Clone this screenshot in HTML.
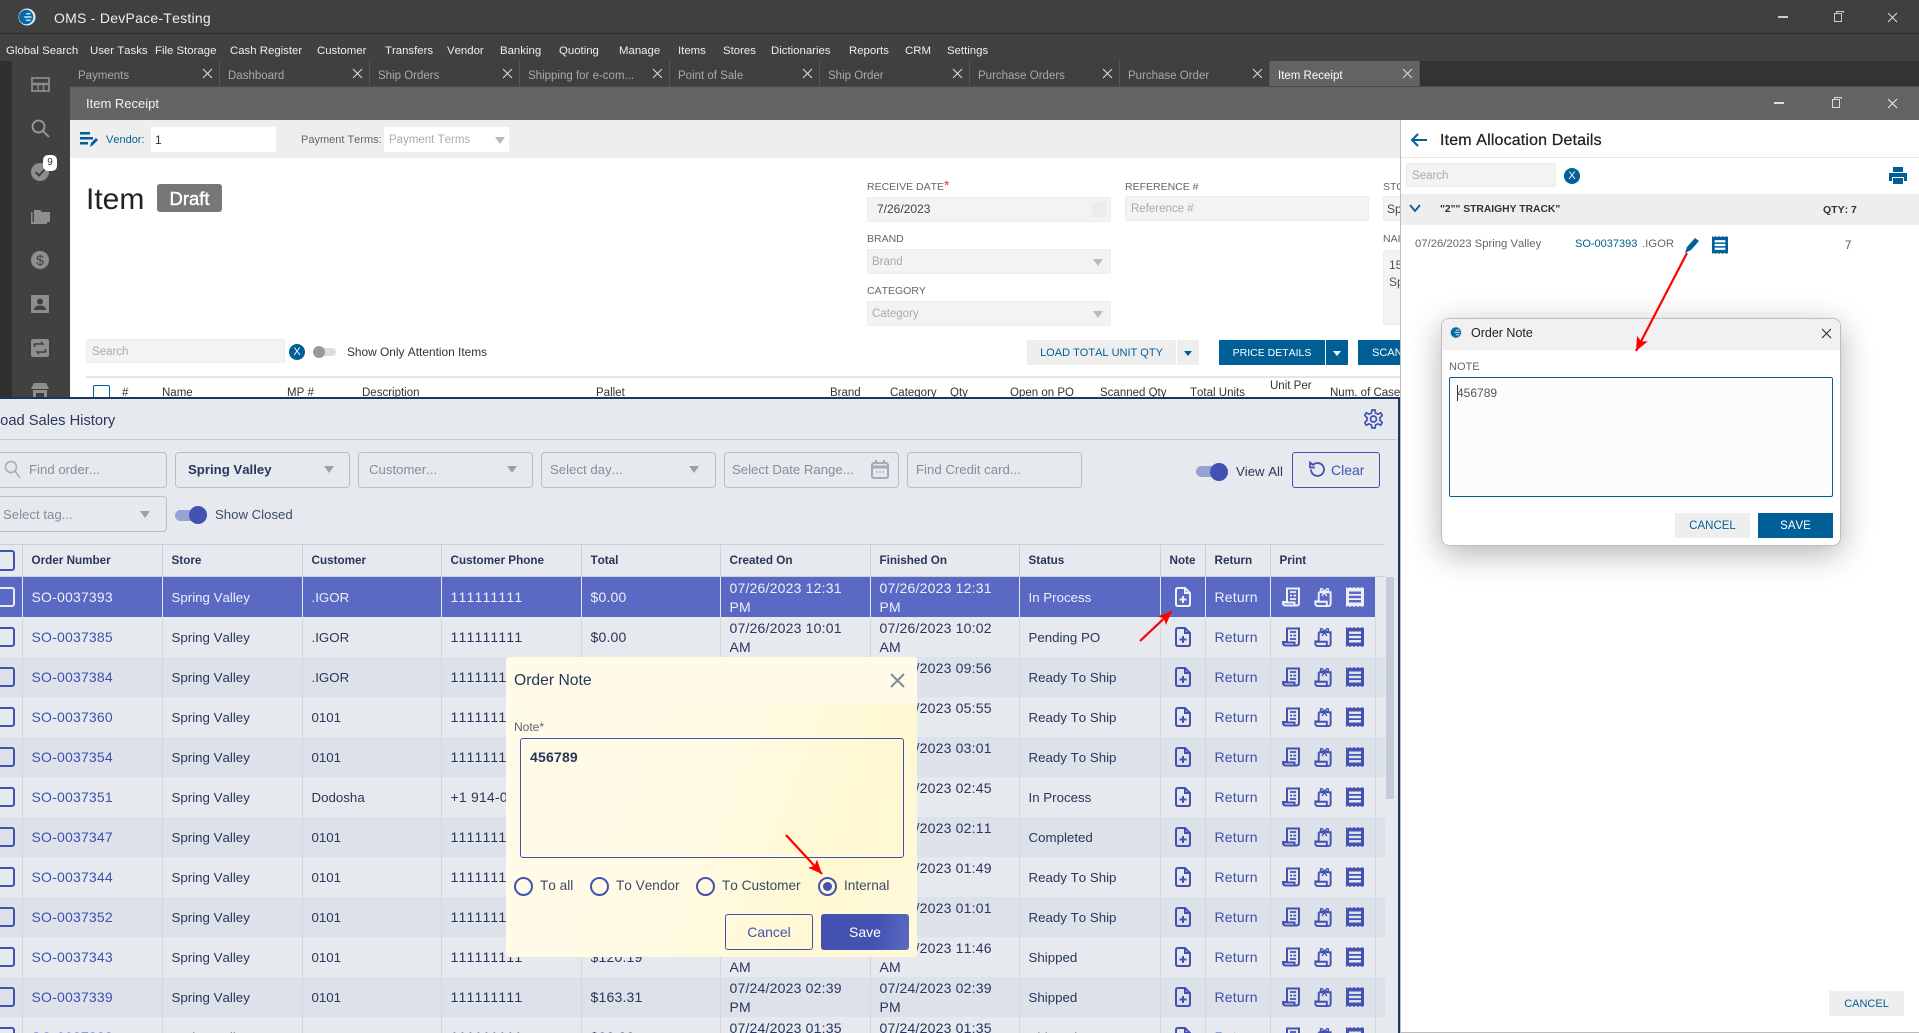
<!DOCTYPE html>
<html lang="en">
<head>
<meta charset="utf-8">
<title>OMS - DevPace-Testing</title>
<style>
html,body{margin:0;padding:0;width:1919px;height:1033px;overflow:hidden;background:#fff;font-family:"Liberation Sans",Arial,sans-serif;font-kerning:none}
*{box-sizing:border-box}
#p{position:relative;width:1919px;height:1033px;overflow:hidden;background:#fff}
.a{position:absolute}
.t{position:absolute;line-height:20px;white-space:nowrap}
.m{color:#eee;font-size:11.4px;top:41px}
.tab{position:absolute;top:61px;width:150px;height:25px;border-right:1px solid #555;background:#3f3f3f;color:#aaa;font-size:11.5px;line-height:30px;padding-left:8px}
.tab svg{position:absolute;left:132px;top:7px;width:11px;height:11px;stroke:#ddd;stroke-width:1;fill:none}
.tab.on{background:#636363;color:#fff}
.lb{font-size:10.5px;color:#666}
.inp{position:absolute;background:#f3f3f3;border:1px solid #ececec;border-radius:2px}
.ph{font-size:11.5px;color:#aaa}
.th1{font-size:11.5px;color:#333;top:383px}
.f{position:absolute;border:1.5px solid #b9bec8;border-radius:4px;height:36px}
.pt{font-size:13.2px;color:#858d9b;top:460px}
.tri{position:absolute;width:0;height:0;border-left:5px solid transparent;border-right:5px solid transparent;border-top:7px solid #98a0ae}
#rows{position:absolute;left:0;top:544px;width:1385px;color:#1f2f52;font-size:14px;letter-spacing:.2px}
.r{display:grid;grid-template-columns:23px 140px 140px 139px 140px 139px 150px 149px 141px 45px 65px 105px 9px;height:40px;line-height:19px;background:#e6eaee;--b:#e6eaee;color:#27365a}
.r.d{background:#dde1ea}
.r>div{border-right:1px solid #d3d8e0;padding-left:8.5px;padding-top:1px;display:flex;align-items:center;white-space:nowrap;overflow:hidden;position:relative}
.r>div:nth-child(3),.r>div:nth-child(4),.r>div:nth-child(9){font-size:13.3px;letter-spacing:0}
.r>div:first-child{padding:0}
.r>div:last-child{border:0;background:#e6eaee}
.r.d>div:last-child{background:#dde1ea}
.r a{color:#3f50ae}
.r.s{background:linear-gradient(to right,#5a6ac4 1376px,#e6eaee 1376px);color:#eef0fa}
.r.s>div{border-right-color:#e4e7f4}
.r.s a{color:#eef0fa}
.r.s>div:last-child{background:#e6eaee}
.r.h{height:33px;border-top:1px solid #cbd0d8;border-bottom:1px solid #cbd0d8;font-weight:700;color:#27365a;background:#e6eaee}
.r.h>div,.r.h>div:nth-child(n){font-size:11.7px;letter-spacing:0;border-right-color:#cbd0d8;padding-top:0}
.cb{position:absolute;left:-5px;top:10px;width:20px;height:20px;border:2.5px solid #4352b0;border-radius:3px}
.r.h .cb{top:5px;height:21px}
.r.s .cb{border-color:#e8ebf7}
.ic{color:#4352b0}
.r.s .ic{color:#eef0fa}
.ic svg{position:absolute;top:10px}
.rad{position:absolute;top:877px;width:19px;height:19px;border-radius:50%;border:2px solid #4352b0}
.rl{font-size:13.6px;color:#3c4a68;top:876px}
</style>
</head>
<body>
<svg width="0" height="0" style="position:absolute">
<defs>
<symbol id="x" viewBox="0 0 11 11"><path d="M1 1L10 10M10 1L1 10"/></symbol>
<symbol id="note" viewBox="0 0 16 20"><path d="M3 1H10L15 6V17Q15 19 13 19H3Q1 19 1 17V3Q1 1 3 1ZM10 1V6H15" fill="none" stroke="currentColor" stroke-width="2"/><path d="M8 9V16M4.500 12.500H11.500" fill="none" stroke="currentColor" stroke-width="2"/></symbol>
<symbol id="rc" viewBox="0 0 18 20"><path d="M5 1.500H17V16Q17 18.500 14.500 18.500H3.500Q1 18.500 1 16V15H5ZM1 15.500H12.500V19" fill="none" stroke="currentColor" stroke-width="2"/><path d="M8 5H14M8 8.500H10M11.500 8.500H14M8 12H14" fill="none" stroke="currentColor" stroke-width="1.700"/></symbol>
<symbol id="gf" viewBox="0 0 18 21"><path d="M4.500 5.500V15H1V17.500Q1 20 3.500 20H14.500Q17 20 17 17.500V5.500H4.500M1 15.500H13V20" fill="none" stroke="currentColor" stroke-width="2"/><path d="M10.500 5C8 .7 5.500 .7 6.500 4.200L10.500 5C13 .7 15.500 .7 14.500 4.200L10.500 5M10.500 5.500L8 9.500M10.500 5.500L13 9.500" fill="none" stroke="currentColor" stroke-width="1.400"/></symbol>
<symbol id="ls" viewBox="0 0 18 20"><path fill="currentColor" fill-rule="evenodd" d="M0 0L2 1.200L4 0L6 1.200L8 0L10 1.200L12 0L14 1.200L16 0L18 1.200V18.800L16 20L14 18.800L12 20L10 18.800L8 20L6 18.800L4 20L2 18.800L0 20ZM3 4.500V7H15V4.500ZM3 8.800V11.200H15V8.800ZM3 13V15.500H15V13Z"/></symbol>
<symbol id="logo" viewBox="0 0 20 20"><circle cx="10" cy="10" r="9.500" fill="#e3eaef"/><circle cx="9" cy="10" r="8" fill="#0a6aa8"/><path d="M9 6.500H14M7 10H15M9 13.500H14" fill="none" stroke="#fff" stroke-width="1.300"/></symbol>
<marker id="ah" markerUnits="userSpaceOnUse" markerWidth="16" markerHeight="14" refX="14" refY="6" orient="auto"><path d="M0 0L14 6L0 12L3 6Z" fill="#f00"/></marker>
</defs>
</svg>
<div id="p">
<!-- chrome -->
<div class="a" style="left:0;top:0;width:1919px;height:34px;background:#404040;border-bottom:1px solid #2f2f2f"></div>
<svg class="a" style="left:18px;top:8px" width="18" height="18"><use href="#logo"/></svg>
<div class="t" style="left:54px;top:8px;color:#eee;font-size:14px;letter-spacing:.25px">OMS - DevPace-Testing</div>
<div class="a" style="left:1778px;top:16px;width:10px;height:1.500px;background:#ccc"></div>
<div class="a" style="left:1834px;top:13px;width:8px;height:9px;border:1.300px solid #ccc;background:#404040"></div>
<div class="a" style="left:1836px;top:11px;width:8px;height:2px;border:1px solid #ccc;border-bottom:0"></div>
<svg class="a" style="left:1887px;top:12px;stroke:#ddd;fill:none" width="11" height="11"><use href="#x"/></svg>
<div class="a" style="left:0;top:34px;width:1919px;height:27px;background:#414141"></div>
<div class="t m" style="left:6px">Global Search</div>
<div class="t m" style="left:90px">User Tasks</div>
<div class="t m" style="left:155px">File Storage</div>
<div class="t m" style="left:230px">Cash Register</div>
<div class="t m" style="left:317px">Customer</div>
<div class="t m" style="left:385px">Transfers</div>
<div class="t m" style="left:447px">Vendor</div>
<div class="t m" style="left:500px">Banking</div>
<div class="t m" style="left:559px">Quoting</div>
<div class="t m" style="left:619px">Manage</div>
<div class="t m" style="left:678px">Items</div>
<div class="t m" style="left:723px">Stores</div>
<div class="t m" style="left:771px">Dictionaries</div>
<div class="t m" style="left:849px">Reports</div>
<div class="t m" style="left:905px">CRM</div>
<div class="t m" style="left:947px">Settings</div>

<div class="a" style="left:0;top:61px;width:1919px;height:25px;background:#333"></div>
<div class="tab" style="left:70px">Payments<svg><use href="#x"/></svg></div>
<div class="tab" style="left:220px">Dashboard<svg><use href="#x"/></svg></div>
<div class="tab" style="left:370px">Ship Orders<svg><use href="#x"/></svg></div>
<div class="tab" style="left:520px">Shipping for e-com...<svg><use href="#x"/></svg></div>
<div class="tab" style="left:670px">Point of Sale<svg><use href="#x"/></svg></div>
<div class="tab" style="left:820px">Ship Order<svg><use href="#x"/></svg></div>
<div class="tab" style="left:970px">Purchase Orders<svg><use href="#x"/></svg></div>
<div class="tab" style="left:1120px">Purchase Order<svg><use href="#x"/></svg></div>
<div class="tab on" style="left:1270px">Item Receipt<svg><use href="#x"/></svg></div>

<!-- sidebar -->
<div class="a" style="left:0;top:61px;width:12px;height:340px;background:#2f2f2f"></div>
<div class="a" style="left:12px;top:61px;width:58px;height:340px;background:#414141"></div>
<svg class="a" style="left:31px;top:77px" width="19" height="15" fill="none" stroke="#8c8c8c" stroke-width="1.800"><rect x="1" y="1" width="17" height="13"/><path d="M1 7H18" stroke-width="2.400"/><path d="M7 8V14M12.500 8V14" stroke-width="1.400"/></svg>
<svg class="a" style="left:31px;top:119px" width="19" height="19" fill="none" stroke="#9a9a9a" stroke-width="1.800"><circle cx="7.500" cy="7.500" r="6"/><path d="M12 12L18 18"/></svg>
<svg class="a" style="left:31px;top:163px" width="18" height="18"><circle cx="9" cy="9" r="9" fill="#8e8e8e"/><path d="M4.500 9L8 12.500L14 6" fill="none" stroke="#414141" stroke-width="2"/></svg>
<div class="a" style="left:43px;top:155px;width:14px;height:16px;border-radius:5px;background:#fff;color:#333;font-size:10px;line-height:16px;text-align:center">9</div>
<svg class="a" style="left:31px;top:209px" width="19" height="15"><path d="M0 3H1.500V13H16V15H0Z" fill="#8e8e8e"/><path d="M3 1H9L11 3H19V13H3Z" fill="#8e8e8e"/></svg>
<svg class="a" style="left:31px;top:251px" width="18" height="18"><circle cx="9" cy="9" r="9" fill="#8e8e8e"/><text x="9" y="14" text-anchor="middle" font-size="14" fill="#414141" font-family="Liberation Sans">$</text></svg>
<svg class="a" style="left:31px;top:295px" width="18" height="18"><rect width="18" height="18" rx="1" fill="#8e8e8e"/><circle cx="9" cy="6.500" r="3" fill="#414141"/><path d="M3 15Q3 10.500 9 10.500Q15 10.500 15 15Z" fill="#414141"/></svg>
<svg class="a" style="left:31px;top:339px" width="18" height="18"><rect width="18" height="18" rx="2" fill="#8e8e8e"/><path d="M3.500 8V5H12L10 3M14.500 10V13H6L8 15" fill="none" stroke="#414141" stroke-width="1.500"/></svg>
<svg class="a" style="left:31px;top:383px" width="18" height="14"><path d="M3 0H15L18 6H0ZM2 7H16V14H13V10H5V14H2Z" fill="#8e8e8e"/></svg>

<!-- inner window -->
<div class="a" style="left:70px;top:86px;width:1849px;height:34px;background:#636363;border-top:1px solid #4a4a4a"></div>
<div class="t" style="left:86px;top:94px;color:#f2f2f2;font-size:13px">Item Receipt</div>
<div class="a" style="left:1774px;top:102px;width:10px;height:1.500px;background:#ddd"></div>
<div class="a" style="left:1832px;top:99px;width:8px;height:9px;border:1.300px solid #ddd;background:#636363"></div>
<div class="a" style="left:1834px;top:97px;width:8px;height:2px;border:1px solid #ddd;border-bottom:0"></div>
<svg class="a" style="left:1887px;top:98px;stroke:#eee;fill:none" width="11" height="11"><use href="#x"/></svg>

<div class="a" style="left:70px;top:120px;width:1330px;height:38px;background:#eee"></div>
<div class="a" style="left:70px;top:158px;width:1330px;height:240px;background:#fff"></div>
<svg class="a" style="left:80px;top:131px" width="18" height="17"><path d="M0 1H10V3.500H0ZM0 6H13V8.500H0ZM0 11H8V13.500H0Z" fill="#005f96"/><path d="M10 16L11 12L16 7L18 9L13 14Z" fill="#005f96"/></svg>
<div class="t" style="left:106px;top:130px;color:#005f96;font-size:11px">Vendor:</div>
<div class="a" style="left:151px;top:127px;width:125px;height:25px;background:#fff"></div>
<div class="t" style="left:155px;top:130px;color:#333;font-size:12px">1</div>
<div class="t lb" style="left:301px;top:130px;font-size:11px">Payment Terms:</div>
<div class="a" style="left:384px;top:127px;width:125px;height:25px;background:#fff"></div>
<div class="t ph" style="left:389px;top:130px">Payment Terms</div>
<div class="tri" style="left:495px;top:137px;border-top-color:#bbb"></div>

<div class="t" style="left:86px;top:182px;font-size:30px;line-height:36px;color:#222">Item</div>
<div class="a" style="left:157px;top:184px;width:65px;height:28px;background:#777;border-radius:3px;color:#fff;font-size:18.500px;line-height:29px;text-align:center;-webkit-text-stroke:.4px #fff">Draft</div>

<div class="t lb" style="left:867px;top:175px">RECEIVE DATE<span style="color:#e33;font-size:14px">*</span></div>
<div class="inp" style="left:867px;top:197px;width:244px;height:25px"></div>
<div class="t" style="left:877px;top:199px;font-size:12px;color:#444">7/26/2023</div>
<div class="a" style="left:1092px;top:202px;width:14px;height:15px;background:#ececec;border-radius:2px"></div>
<div class="t lb" style="left:867px;top:229px">BRAND</div>
<div class="inp" style="left:867px;top:249px;width:244px;height:25px"></div>
<div class="t ph" style="left:872px;top:252px">Brand</div>
<div class="tri" style="left:1093px;top:259px;border-top-color:#bbb"></div>
<div class="t lb" style="left:867px;top:281px">CATEGORY</div>
<div class="inp" style="left:867px;top:301px;width:244px;height:25px"></div>
<div class="t ph" style="left:872px;top:304px">Category</div>
<div class="tri" style="left:1093px;top:311px;border-top-color:#bbb"></div>

<div class="t lb" style="left:1125px;top:177px">REFERENCE #</div>
<div class="inp" style="left:1125px;top:196px;width:244px;height:25px"></div>
<div class="t ph" style="left:1131px;top:199px">Reference #</div>
<div class="t lb" style="left:1383px;top:177px">STO</div>
<div class="inp" style="left:1383px;top:196px;width:20px;height:25px"></div>
<div class="t" style="left:1387px;top:199px;font-size:12px;color:#444">Sp</div>
<div class="t lb" style="left:1383px;top:229px">NAI</div>
<div class="inp" style="left:1383px;top:250px;width:20px;height:75px"></div>
<div class="t" style="left:1389px;top:255px;font-size:12px;color:#555">15</div>
<div class="t" style="left:1389px;top:272px;font-size:12px;color:#555">Sp</div>

<div class="inp" style="left:86px;top:339px;width:199px;height:24px"></div>
<div class="t ph" style="left:92px;top:342px">Search</div>
<div class="a" style="left:289px;top:344px;width:16px;height:16px;border-radius:50%;background:#005f96;color:#fff;font-size:11px;line-height:16px;text-align:center">X</div>
<div class="a" style="left:314px;top:348px;width:22px;height:8px;border-radius:4px;background:#ddd"></div>
<div class="a" style="left:313px;top:346px;width:12px;height:12px;border-radius:50%;background:#999"></div>
<div class="t" style="left:347px;top:342px;font-size:11.900px;color:#333">Show Only Attention Items</div>

<div class="a" style="left:1027px;top:340px;width:149px;height:25px;background:#eee;color:#005f96;font-size:11px;line-height:26px;text-align:center">LOAD TOTAL UNIT QTY</div>
<div class="a" style="left:1177px;top:340px;width:22px;height:25px;background:#eee"></div>
<div class="tri" style="left:1184px;top:351px;border-left-width:4px;border-right-width:4px;border-top:5px solid #005f96"></div>
<div class="a" style="left:1219px;top:340px;width:106px;height:25px;background:#005f96;color:#fff;font-size:10.500px;line-height:26px;text-align:center">PRICE DETAILS</div>
<div class="a" style="left:1326px;top:340px;width:22px;height:25px;background:#005f96"></div>
<div class="tri" style="left:1333px;top:351px;border-left-width:4px;border-right-width:4px;border-top:5px solid #fff"></div>
<div class="a" style="left:1358px;top:340px;width:42px;height:25px;background:#005f96;color:#fff;font-size:11px;line-height:26px;padding-left:14px;overflow:hidden;white-space:nowrap">SCAN</div>

<div class="a" style="left:86px;top:376px;width:1314px;height:1.500px;background:#e5e5e5"></div>
<div class="a" style="left:93px;top:385px;width:17px;height:14px;border:1.500px solid #005f96;border-bottom:0;border-radius:2px 2px 0 0"></div>
<div class="t th1" style="left:122px">#</div>
<div class="t th1" style="left:162px">Name</div>
<div class="t th1" style="left:287px">MP #</div>
<div class="t th1" style="left:362px">Description</div>
<div class="t th1" style="left:596px">Pallet</div>
<div class="t th1" style="left:830px">Brand</div>
<div class="t th1" style="left:890px">Category</div>
<div class="t th1" style="left:950px">Qty</div>
<div class="t th1" style="left:1010px">Open on PO</div>
<div class="t th1" style="left:1100px">Scanned Qty</div>
<div class="t th1" style="left:1190px">Total Units</div>
<div class="t th1" style="left:1270px;top:376px">Unit Per</div>
<div class="t th1" style="left:1330px">Num. of Case</div>

<!-- right panel -->
<div class="a" style="left:1400px;top:120px;width:519px;height:913px;background:#fff;border-left:1px solid #bbb;border-bottom:1px solid #bbb"></div>
<svg class="a" style="left:1410px;top:132px" width="18" height="16" fill="none" stroke="#005f96" stroke-width="2"><path d="M17 8H2M8 2L2 8L8 14"/></svg>
<div class="t" style="left:1440px;top:131px;font-size:16px;color:#222;letter-spacing:.15px;-webkit-text-stroke:.25px #222">Item Allocation Details</div>
<div class="a" style="left:1401px;top:157px;width:518px;height:1px;background:#e8e8e8"></div>
<div class="inp" style="left:1406px;top:163px;width:150px;height:24px"></div>
<div class="t ph" style="left:1412px;top:166px">Search</div>
<div class="a" style="left:1564px;top:168px;width:16px;height:16px;border-radius:50%;background:#005f96;color:#fff;font-size:11px;line-height:16px;text-align:center">X</div>
<svg class="a" style="left:1889px;top:167px" width="18" height="17" fill="#005f96"><path d="M4 0H14V5H4ZM0 6H18V14H15V10H3V14H0ZM4 11H14V17H4Z"/></svg>
<div class="a" style="left:1401px;top:194px;width:518px;height:31px;background:#eee"></div>
<svg class="a" style="left:1409px;top:204px" width="12" height="9" fill="none" stroke="#005f96" stroke-width="1.800"><path d="M1 1L6 7L11 1"/></svg>
<div class="t" style="left:1440px;top:200px;font-size:10.300px;font-weight:700;color:#333">"2"" STRAIGHY TRACK"</div>
<div class="t" style="left:1823px;top:200px;font-size:10.500px;font-weight:700;color:#333">QTY: 7</div>
<div class="t" style="left:1415px;top:234px;font-size:11.300px;color:#666">07/26/2023 Spring Valley</div>
<div class="t" style="left:1575px;top:234px;font-size:11px;color:#005f96">SO-0037393</div>
<div class="t" style="left:1642px;top:234px;font-size:11.300px;color:#666">.IGOR</div>
<svg class="a" style="left:1685px;top:237px" width="15" height="16" fill="#005f96"><path d="M0 16L2 10L10 1L14 4L6 13Z"/></svg>
<svg class="a" style="left:1712px;top:236px;color:#005f96" width="16" height="18"><use href="#ls"/></svg>
<div class="t" style="left:1845px;top:236px;font-size:11.500px;color:#555">7</div>
<div class="a" style="left:1829px;top:991px;width:75px;height:25px;background:#eee;color:#005f96;font-size:11px;line-height:26px;text-align:center">CANCEL</div>

<!-- allocation note modal -->
<div class="a" style="left:1441px;top:318px;width:400px;height:228px;background:#fff;border-radius:8px;border:1px solid #bdbdbd;box-shadow:0 8px 32px rgba(0,0,0,.3)"></div>
<div class="a" style="left:1442px;top:319px;width:398px;height:31px;background:#f1f1f1;border-radius:7px 7px 0 0;border-bottom:1px solid #eaeaea"></div>
<svg class="a" style="left:1450px;top:326px" width="13" height="13"><use href="#logo"/></svg>
<div class="t" style="left:1471px;top:323px;font-size:12.500px;color:#222">Order Note</div>
<svg class="a" style="left:1821px;top:328px;stroke:#222;fill:none" width="11" height="11"><use href="#x"/></svg>
<div class="t" style="left:1449px;top:357px;font-size:11px;color:#666">NOTE</div>
<div class="a" style="left:1449px;top:377px;width:384px;height:120px;background:#fcfcfc;border:1px solid #005f96;border-radius:2px"></div>
<div class="t" style="left:1457px;top:383px;font-size:12px;color:#555">456789</div>
<div class="a" style="left:1457px;top:385px;width:1px;height:16px;background:#333"></div>
<div class="a" style="left:1675px;top:513px;width:75px;height:25px;background:#eee;color:#005f96;font-size:11.500px;line-height:26px;text-align:center">CANCEL</div>
<div class="a" style="left:1758px;top:513px;width:75px;height:25px;background:#005f96;color:#fff;font-size:11.500px;line-height:26px;text-align:center">SAVE</div>

<!-- sales history panel -->
<div class="a" style="left:0;top:397px;width:1400px;height:636px;background:#e6eaee;border-top:2px solid #1d3461;border-right:2px solid #1d3461"></div>
<div class="t" style="left:-8px;top:411px;font-size:14.700px;color:#27365a">Load Sales History</div>
<svg class="a" style="left:1364px;top:409px" width="19" height="20" fill="none" stroke="#4352b0" stroke-width="1.700"><path d="M8 1H11L11.600 4L14 5.200L16.700 3.800L18.300 6.500L16 8.600V11.400L18.300 13.500L16.700 16.200L14 14.800L11.600 16L11 19H8L7.400 16L5 14.800L2.300 16.200L.7 13.500L3 11.400V8.600L.7 6.500L2.300 3.800L5 5.200L7.400 4Z"/><circle cx="9.500" cy="10" r="3"/></svg>
<div class="a" style="left:0;top:439px;width:1397px;height:1px;background:#c5cad2"></div>

<div class="f" style="left:-6px;top:452px;width:173px"></div>
<svg class="a" style="left:4px;top:460px" width="17" height="19" fill="none" stroke="#aab0bb" stroke-width="1.700"><circle cx="7" cy="7" r="5.500"/><path d="M11 11L16 18"/></svg>
<div class="t pt" style="left:29px">Find order...</div>
<div class="f" style="left:175px;top:452px;width:175px"></div>
<div class="t pt" style="left:188px;color:#27365a;font-weight:700">Spring Valley</div>
<div class="tri" style="left:324px;top:466px"></div>
<div class="f" style="left:358px;top:452px;width:175px"></div>
<div class="t pt" style="left:369px">Customer...</div>
<div class="tri" style="left:507px;top:466px"></div>
<div class="f" style="left:541px;top:452px;width:175px"></div>
<div class="t pt" style="left:550px">Select day...</div>
<div class="tri" style="left:689px;top:466px"></div>
<div class="f" style="left:724px;top:452px;width:175px"></div>
<div class="t pt" style="left:732px">Select Date Range...</div>
<svg class="a" style="left:871px;top:460px" width="18" height="19" fill="none" stroke="#a4aab6" stroke-width="2"><rect x="1" y="3" width="16" height="15" rx="2"/><path d="M1 7H17" stroke-width="3"/><path d="M5 0V4M13 0V4"/><path d="M5 12H6.500M8.300 12H9.800M11.600 12H13.100" stroke-width="1.500"/></svg>
<div class="f" style="left:907px;top:452px;width:175px"></div>
<div class="t pt" style="left:916px">Find Credit card...</div>
<div class="a" style="left:1196px;top:466px;width:30px;height:11px;border-radius:6px;background:#97a1d4"></div>
<div class="a" style="left:1210px;top:463px;width:18px;height:18px;border-radius:50%;background:#4352b0"></div>
<div class="t pt" style="left:1236px;top:462px;color:#27365a">View All</div>
<div class="a" style="left:1292px;top:452px;width:88px;height:36px;border:1.500px solid #4352b0;border-radius:3px"></div>
<svg class="a" style="left:1308px;top:461px" width="17" height="17" fill="none" stroke="#4352b0" stroke-width="1.800"><path d="M3 8.500A6.500 6.500 0 1 0 5 3.800L2 1.500V6.500H7"/></svg>
<div class="t pt" style="left:1331px;color:#4352b0;font-size:14px">Clear</div>

<div class="f" style="left:-6px;top:496px;width:173px"></div>
<div class="t pt" style="left:3px;top:505px">Select tag...</div>
<div class="tri" style="left:140px;top:511px"></div>
<div class="a" style="left:175px;top:510px;width:30px;height:11px;border-radius:6px;background:#97a1d4"></div>
<div class="a" style="left:189px;top:506px;width:18px;height:18px;border-radius:50%;background:#4352b0"></div>
<div class="t pt" style="left:215px;top:505px;color:#3c4a68">Show Closed</div>

<div class="a" style="left:1376px;top:577px;width:21px;height:456px;background:#e6eaee"></div>
<div class="a" style="left:1386px;top:577px;width:8px;height:222px;background:#c5ccd9"></div>

<div id="rows">
<div class="r h"><div><span class="cb"></span></div><div>Order Number</div><div>Store</div><div>Customer</div><div>Customer Phone</div><div>Total</div><div>Created On</div><div>Finished On</div><div>Status</div><div>Note</div><div>Return</div><div>Print</div></div>

<div class="r s"><div><span class="cb"></span></div><div><a>SO-0037393</a></div><div>Spring Valley</div><div>.IGOR</div><div>111111111</div><div>$0.00</div><div>07/26/2023 12:31<br>PM</div><div>07/26/2023 12:31<br>PM</div><div>In Process</div><div class="ic"><svg style="left:14px" width="16" height="20"><use href="#note"/></svg></div><div><a>Return</a></div><div class="ic"><svg style="left:11px" width="18" height="20"><use href="#rc"/></svg><svg style="left:43px" width="18" height="20"><use href="#gf"/></svg><svg style="left:75px" width="18" height="20"><use href="#ls"/></svg></div><div></div></div>

<div class="r"><div><span class="cb"></span></div><div><a>SO-0037385</a></div><div>Spring Valley</div><div>.IGOR</div><div>111111111</div><div>$0.00</div><div>07/26/2023 10:01<br>AM</div><div>07/26/2023 10:02<br>AM</div><div>Pending PO</div><div class="ic"><svg style="left:14px" width="16" height="20"><use href="#note"/></svg></div><div><a>Return</a></div><div class="ic"><svg style="left:11px" width="18" height="20"><use href="#rc"/></svg><svg style="left:43px" width="18" height="20"><use href="#gf"/></svg><svg style="left:75px" width="18" height="20"><use href="#ls"/></svg></div><div></div></div>

<div class="r d"><div><span class="cb"></span></div><div><a>SO-0037384</a></div><div>Spring Valley</div><div>.IGOR</div><div>111111111</div><div>$0.00</div><div>07/26/2023 09:55<br>AM</div><div>07/26/2023 09:56<br>AM</div><div>Ready To Ship</div><div class="ic"><svg style="left:14px" width="16" height="20"><use href="#note"/></svg></div><div><a>Return</a></div><div class="ic"><svg style="left:11px" width="18" height="20"><use href="#rc"/></svg><svg style="left:43px" width="18" height="20"><use href="#gf"/></svg><svg style="left:75px" width="18" height="20"><use href="#ls"/></svg></div><div></div></div>

<div class="r"><div><span class="cb"></span></div><div><a>SO-0037360</a></div><div>Spring Valley</div><div>0101</div><div>111111111</div><div>$0.00</div><div>07/26/2023 05:55<br>AM</div><div>07/26/2023 05:55<br>AM</div><div>Ready To Ship</div><div class="ic"><svg style="left:14px" width="16" height="20"><use href="#note"/></svg></div><div><a>Return</a></div><div class="ic"><svg style="left:11px" width="18" height="20"><use href="#rc"/></svg><svg style="left:43px" width="18" height="20"><use href="#gf"/></svg><svg style="left:75px" width="18" height="20"><use href="#ls"/></svg></div><div></div></div>

<div class="r d"><div><span class="cb"></span></div><div><a>SO-0037354</a></div><div>Spring Valley</div><div>0101</div><div>111111111</div><div>$0.00</div><div>07/26/2023 03:01<br>AM</div><div>07/26/2023 03:01<br>AM</div><div>Ready To Ship</div><div class="ic"><svg style="left:14px" width="16" height="20"><use href="#note"/></svg></div><div><a>Return</a></div><div class="ic"><svg style="left:11px" width="18" height="20"><use href="#rc"/></svg><svg style="left:43px" width="18" height="20"><use href="#gf"/></svg><svg style="left:75px" width="18" height="20"><use href="#ls"/></svg></div><div></div></div>

<div class="r"><div><span class="cb"></span></div><div><a>SO-0037351</a></div><div>Spring Valley</div><div>Dodosha</div><div>+1 914-000</div><div>$0.00</div><div>07/26/2023 02:45<br>AM</div><div>07/26/2023 02:45<br>AM</div><div>In Process</div><div class="ic"><svg style="left:14px" width="16" height="20"><use href="#note"/></svg></div><div><a>Return</a></div><div class="ic"><svg style="left:11px" width="18" height="20"><use href="#rc"/></svg><svg style="left:43px" width="18" height="20"><use href="#gf"/></svg><svg style="left:75px" width="18" height="20"><use href="#ls"/></svg></div><div></div></div>

<div class="r d"><div><span class="cb"></span></div><div><a>SO-0037347</a></div><div>Spring Valley</div><div>0101</div><div>111111111</div><div>$0.00</div><div>07/26/2023 02:11<br>AM</div><div>07/26/2023 02:11<br>AM</div><div>Completed</div><div class="ic"><svg style="left:14px" width="16" height="20"><use href="#note"/></svg></div><div><a>Return</a></div><div class="ic"><svg style="left:11px" width="18" height="20"><use href="#rc"/></svg><svg style="left:43px" width="18" height="20"><use href="#gf"/></svg><svg style="left:75px" width="18" height="20"><use href="#ls"/></svg></div><div></div></div>

<div class="r"><div><span class="cb"></span></div><div><a>SO-0037344</a></div><div>Spring Valley</div><div>0101</div><div>111111111</div><div>$0.00</div><div>07/26/2023 01:49<br>AM</div><div>07/26/2023 01:49<br>AM</div><div>Ready To Ship</div><div class="ic"><svg style="left:14px" width="16" height="20"><use href="#note"/></svg></div><div><a>Return</a></div><div class="ic"><svg style="left:11px" width="18" height="20"><use href="#rc"/></svg><svg style="left:43px" width="18" height="20"><use href="#gf"/></svg><svg style="left:75px" width="18" height="20"><use href="#ls"/></svg></div><div></div></div>

<div class="r d"><div><span class="cb"></span></div><div><a>SO-0037352</a></div><div>Spring Valley</div><div>0101</div><div>111111111</div><div>$0.00</div><div>07/26/2023 01:01<br>AM</div><div>07/26/2023 01:01<br>AM</div><div>Ready To Ship</div><div class="ic"><svg style="left:14px" width="16" height="20"><use href="#note"/></svg></div><div><a>Return</a></div><div class="ic"><svg style="left:11px" width="18" height="20"><use href="#rc"/></svg><svg style="left:43px" width="18" height="20"><use href="#gf"/></svg><svg style="left:75px" width="18" height="20"><use href="#ls"/></svg></div><div></div></div>

<div class="r"><div><span class="cb"></span></div><div><a>SO-0037343</a></div><div>Spring Valley</div><div>0101</div><div>111111111</div><div>$120.19</div><div>07/25/2023 11:46<br>AM</div><div>07/25/2023 11:46<br>AM</div><div>Shipped</div><div class="ic"><svg style="left:14px" width="16" height="20"><use href="#note"/></svg></div><div><a>Return</a></div><div class="ic"><svg style="left:11px" width="18" height="20"><use href="#rc"/></svg><svg style="left:43px" width="18" height="20"><use href="#gf"/></svg><svg style="left:75px" width="18" height="20"><use href="#ls"/></svg></div><div></div></div>

<div class="r d"><div><span class="cb"></span></div><div><a>SO-0037339</a></div><div>Spring Valley</div><div>0101</div><div>111111111</div><div>$163.31</div><div>07/24/2023 02:39<br>PM</div><div>07/24/2023 02:39<br>PM</div><div>Shipped</div><div class="ic"><svg style="left:14px" width="16" height="20"><use href="#note"/></svg></div><div><a>Return</a></div><div class="ic"><svg style="left:11px" width="18" height="20"><use href="#rc"/></svg><svg style="left:43px" width="18" height="20"><use href="#gf"/></svg><svg style="left:75px" width="18" height="20"><use href="#ls"/></svg></div><div></div></div>

<div class="r"><div><span class="cb"></span></div><div><a>SO-0037338</a></div><div>Spring Valley</div><div>0101</div><div>111111111</div><div>$90.00</div><div>07/24/2023 01:35<br>PM</div><div>07/24/2023 01:35<br>PM</div><div>Shipped</div><div class="ic"><svg style="left:14px" width="16" height="20"><use href="#note"/></svg></div><div><a>Return</a></div><div class="ic"><svg style="left:11px" width="18" height="20"><use href="#rc"/></svg><svg style="left:43px" width="18" height="20"><use href="#gf"/></svg><svg style="left:75px" width="18" height="20"><use href="#ls"/></svg></div><div></div></div>
</div>

<!-- yellow modal -->
<div class="a" style="left:506px;top:657px;width:411px;height:300px;background:#fffbe8;border-radius:3px;overflow:hidden"><div class="a" style="left:0;top:46px;width:411px;height:254px;background:linear-gradient(112deg,#fffbe9 0%,#fffbe4 45%,#fff8d2 78%,#fff9da 100%)"></div></div>
<div class="t" style="left:514px;top:671px;font-size:15.700px;color:#27365a">Order Note</div>
<svg class="a" style="left:890px;top:673px" width="15" height="15" fill="none" stroke="#7f8a9a" stroke-width="2"><path d="M1 1L14 14M14 1L1 14"/></svg>
<div class="t" style="left:514px;top:717px;font-size:12px;color:#5a6472">Note*</div>
<div class="a" style="left:520px;top:738px;width:384px;height:120px;border:1.500px solid #4352b0;border-radius:3px"></div>
<div class="t" style="left:530px;top:747px;font-size:14px;font-weight:700;color:#27365a;letter-spacing:.2px">456789</div>
<div class="rad" style="left:514px"></div><div class="t rl" style="left:540px">To all</div>
<div class="rad" style="left:590px"></div><div class="t rl" style="left:616px">To Vendor</div>
<div class="rad" style="left:696px"></div><div class="t rl" style="left:722px">To Customer</div>
<div class="rad" style="left:818px"></div><div class="a" style="left:823px;top:882px;width:9px;height:9px;border-radius:50%;background:#4352b0"></div><div class="t rl" style="left:844px">Internal</div>
<div class="a" style="left:725px;top:914px;width:88px;height:36px;border:1.500px solid #4352b0;border-radius:3px;color:#4352b0;font-size:14px;line-height:34px;text-align:center">Cancel</div>
<div class="a" style="left:821px;top:914px;width:88px;height:36px;background:linear-gradient(100deg,#4352b0 60%,#5a6ac4);border-radius:3px;color:#fff;font-size:14px;line-height:36px;text-align:center">Save</div>

<!-- red arrows -->
<svg class="a" style="left:0;top:0;pointer-events:none" width="1919" height="1033" fill="none" stroke="#f00" stroke-width="2.200">
<line x1="1687" y1="253" x2="1636" y2="351" marker-end="url(#ah)"/>
<line x1="1140" y1="641" x2="1172" y2="611" marker-end="url(#ah)"/>
<line x1="786" y1="835" x2="822" y2="874" marker-end="url(#ah)"/>
</svg>
</div>
</body>
</html>
